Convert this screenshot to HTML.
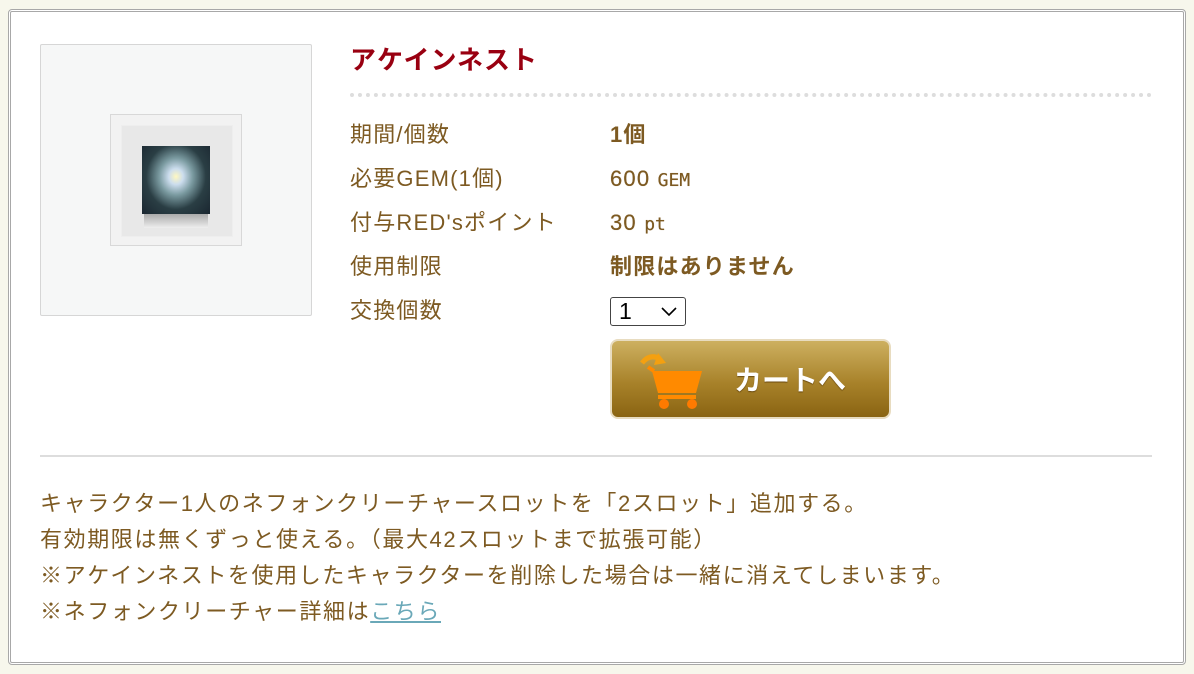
<!DOCTYPE html>
<html><head><meta charset="utf-8"><style>
html,body{margin:0;padding:0;}
body{width:1194px;height:674px;background:#f7f7ec;font-family:"Liberation Sans","Noto Sans CJK JP",sans-serif;color:#7d5a22;position:relative;overflow:hidden;}
.box{position:absolute;left:8px;top:9px;width:1172px;height:650px;background:#fff;border:3px double #a8a8a8;border-radius:4px;}
.thumb{position:absolute;left:40px;top:44px;width:270px;height:270px;border:1px solid #d6d6d6;border-radius:2px;background:#f6f7f7;}
.f{position:absolute;left:110px;top:114px;width:132px;height:132px;background:#f2f2f2;border:1px solid #d8d8d8;box-sizing:border-box;}
.f2{position:absolute;left:10px;top:10px;width:110px;height:110px;background:#e8e8e8;border:1px solid #eee;}
.img{position:absolute;left:142px;top:146px;width:68px;height:68px;background:radial-gradient(ellipse at 50% 45%,#fff8c0 0,#cde 15%,#7a9aa0 35%,#2a3e44 62%,#1a2630 100%);}
.sh{position:absolute;left:144px;top:214px;width:64px;height:14px;background:linear-gradient(#aaa,#eee);}
h1{position:absolute;left:350px;top:44px;margin:0;font-size:26px;color:#990011;font-weight:bold;letter-spacing:1px;line-height:32px;}
.dots{position:absolute;left:350px;top:93px;width:802px;border-top:4px dotted #ddd;}
.row{position:absolute;left:350px;font-size:22px;letter-spacing:1.2px;line-height:28px;}
.v{position:absolute;left:610px;font-size:22px;font-weight:bold;letter-spacing:1.2px;line-height:28px;}
.n{font-weight:normal;text-shadow:0 0 0.5px #7d5a22;}
.mono{font-family:"DejaVu Sans Mono","Liberation Mono",monospace;font-weight:normal;font-size:18px;letter-spacing:0;}
.sel{position:absolute;left:610px;top:297px;width:76px;height:29px;border:1px solid #444;border-radius:3px;box-sizing:border-box;color:#000;font-size:23px;line-height:27px;padding-left:8px;}
.btn{position:absolute;left:610px;top:339px;width:281px;height:80px;border:2px solid #e8dcc0;border-radius:8px;box-sizing:border-box;background:linear-gradient(#cdb060,#a8822a 55%,#8a6412);}
.btn span{position:absolute;left:122px;top:18px;color:#fff;font-size:28px;font-weight:bold;text-shadow:0 1px 1px #6a4a10;}
hr{position:absolute;left:40px;top:455px;width:1112px;margin:0;border:0;border-top:2px solid #ddd;}
.desc{position:absolute;left:40px;top:486px;font-size:22px;line-height:36px;letter-spacing:1.6px;}
a{color:#6aa8b8;}
</style></head><body>
<div class="box"></div>
<div class="thumb"></div>
<div class="f"><div class="f2"></div></div>
<div class="sh"></div><div class="img"></div>
<h1>アケインネスト</h1>
<div class="dots"></div>
<div class="row" style="top:121px">期間/個数</div><div class="v" style="top:121px">1個</div>
<div class="row" style="top:165px">必要GEM(1個)</div><div class="v n" style="top:165px">600 <span class="mono">GEM</span></div>
<div class="row" style="top:209px">付与RED'sポイント</div><div class="v n" style="top:209px">30 <span class="mono">pt</span></div>
<div class="row" style="top:253px">使用制限</div><div class="v" style="top:253px">制限はありません</div>
<div class="row" style="top:297px">交換個数</div>
<div class="sel">1<svg style="position:absolute;right:8px;top:9px" width="16" height="9" viewBox="0 0 16 9"><path d="M1 1L8 8L15 1" stroke="#000" stroke-width="1.6" fill="none"/></svg></div>
<div class="btn"><svg style="position:absolute;left:28px;top:8px" width="80" height="62" viewBox="0 0 80 62"><path d="M2 14Q10 4 20 10" stroke="#f4a010" stroke-width="5" fill="none"/><path d="M18 4L26 14L14 16Z" fill="#f4a010"/><path d="M12 22H62L56 44H18Z" fill="#ff8a00"/><path d="M14 22L8 18M18 48H56" stroke="#ff8a00" stroke-width="4"/><circle cx="24" cy="55" r="5" fill="#ff7a00"/><circle cx="52" cy="55" r="5" fill="#ff7a00"/></svg><span>カートへ</span></div>
<hr>
<div class="desc">キャラクター1人のネフォンクリーチャースロットを「2スロット」追加する。<br>有効期限は無くずっと使える。（最大42スロットまで拡張可能）<br>※アケインネストを使用したキャラクターを削除した場合は一緒に消えてしまいます。<br>※ネフォンクリーチャー詳細は<a href="#">こちら</a></div>
</body></html>
